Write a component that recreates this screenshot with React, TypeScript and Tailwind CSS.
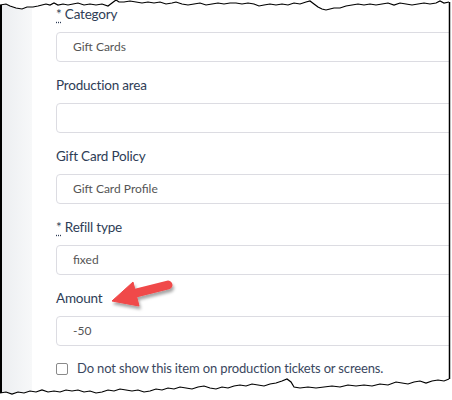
import React from "react";

const topPts =
  "0,5 6,4 10,6 16,8 22,9 27,7 33,7 38,6 42,5 46,4 50,5 54,3 58,5 63,4 68,5 73,4 78,3 84,5 90,4 96,5 102,4 108,6 112,3 116,0 119,2 124,2 130,1 136,2 142,3 148,2 154,3 160,2 166,4 172,3 176,2 182,4 188,5 194,4 200,3 206,5 212,4 218,3 224,4 230,3 236,3 242,4 248,3 254,4 259,6 264,5 270,4 276,5 282,4 288,5 294,3 300,4 306,2 310,1 314,4 318,7 322,9 326,10 330,9 334,8 340,8 346,6 352,5 358,4 364,5 370,4 376,5 382,4 388,3 394,5 400,3 406,4 412,5 418,4 424,3 430,4 436,3 440,1 444,3 449,2";
const botPts =
  "0,393 6,392 12,394 18,392 24,393 30,391 36,392 42,390 48,392 54,391 60,392 66,390 72,391 78,390 84,392 90,391 96,393 102,392 108,390 114,391 120,389 126,390 132,391 138,390 144,392 150,391 156,389 162,390 168,388 174,389 180,387 186,388 192,389 198,387 204,386 210,388 216,389 222,387 228,388 234,386 240,385 246,386 252,384 258,385 264,386 270,384 276,383 282,381 287,379 291,382 294,387 300,388 308,387 316,388 324,387 332,386 340,387 348,385 356,386 364,385 372,386 380,384 388,385 396,382 402,383 408,384 414,382 420,381 426,383 432,381 438,380 444,381 449,379";

function Field({
  label,
  value,
  req,
}: {
  label: string;
  value: string;
  req?: boolean;
}) {
  return (
    <div className="mb-[13px] flex flex-col">
      <label className="h-5 text-[13.5px] leading-5 tracking-[-0.2px] text-[#2e3d56]">
        {req && (
          <>
            <abbr className="no-underline [text-decoration:underline_dotted] underline-offset-[3px]">*</abbr>{" "}
          </>
        )}
        {label}
      </label>
      <div className="mt-2 flex h-[30px] w-[420px] items-center rounded-[4px] border border-[#dcdce2] bg-white pl-[16px] text-[12px] text-[#555]">
        {value}
      </div>
    </div>
  );
}

export default function App() {
  return (
    <div
      className="relative h-[400px] w-[452px] overflow-hidden bg-white"
      style={{ fontFamily: "Lato, 'Liberation Sans', sans-serif" }}
    >
      <div className="flex h-full pl-[2px] pr-[3px]">
        <div className="h-full w-[30px] shrink-0 bg-gradient-to-r from-[#eceef1] to-[#f7f8f9]" />
        <div className="min-w-0 flex-1 overflow-hidden pl-[24px] pt-[4px]">
          <Field label="Category" value="Gift Cards" req />
          <Field label="Production area" value="" />
          <Field label="Gift Card Policy" value="Gift Card Profile" />
          <Field label="Refill type" value="fixed" req />
          <Field label="Amount" value="-50" />
          <div className="mt-[4px] flex h-5 items-center gap-[9px]">
            <span className="h-[12px] w-[12px] rounded-[2px] border border-[#8a8a8a] bg-white" />
            <span className="text-[13px] tracking-[-0.15px] text-[#3a4760]">
              Do not show this item on production tickets or screens.
            </span>
          </div>
        </div>
      </div>

      {/* annotation arrow */}
      <svg className="pointer-events-none absolute left-0 top-0" width="452" height="400">
        <defs>
          <filter id="sh" x="-20%" y="-20%" width="140%" height="160%">
            <feDropShadow dx="1.5" dy="3" stdDeviation="1.8" floodColor="#000" floodOpacity="0.35" />
          </filter>
        </defs>
        <g filter="url(#sh)" fill="#f04848" stroke="#f04848">
          <line x1="132" y1="294" x2="168" y2="285" strokeWidth="9" strokeLinecap="round" />
          <polygon points="112,301 133,282 139,306" strokeWidth="1" strokeLinejoin="round" />
        </g>
      </svg>

      {/* torn paper edges */}
      <svg className="pointer-events-none absolute left-0 top-0" width="452" height="400">
        <polygon points={`0,0 452,0 452,2 ${topPts.split(" ").reverse().join(" ")}`} fill="#fff" />
        <polygon points={`${botPts} 452,379 452,400 0,400`} fill="#fff" />
        <rect x="450" y="0" width="2" height="400" fill="#fff" />
        <polyline points={topPts} fill="none" stroke="#000" strokeWidth="1.2" />
        <polyline points={botPts} fill="none" stroke="#000" strokeWidth="1.2" />
        <line x1="1" y1="5" x2="1" y2="393" stroke="#000" strokeWidth="2" />
        <line x1="449.5" y1="2" x2="449.5" y2="379" stroke="#000" strokeWidth="1.5" />
      </svg>
    </div>
  );
}
